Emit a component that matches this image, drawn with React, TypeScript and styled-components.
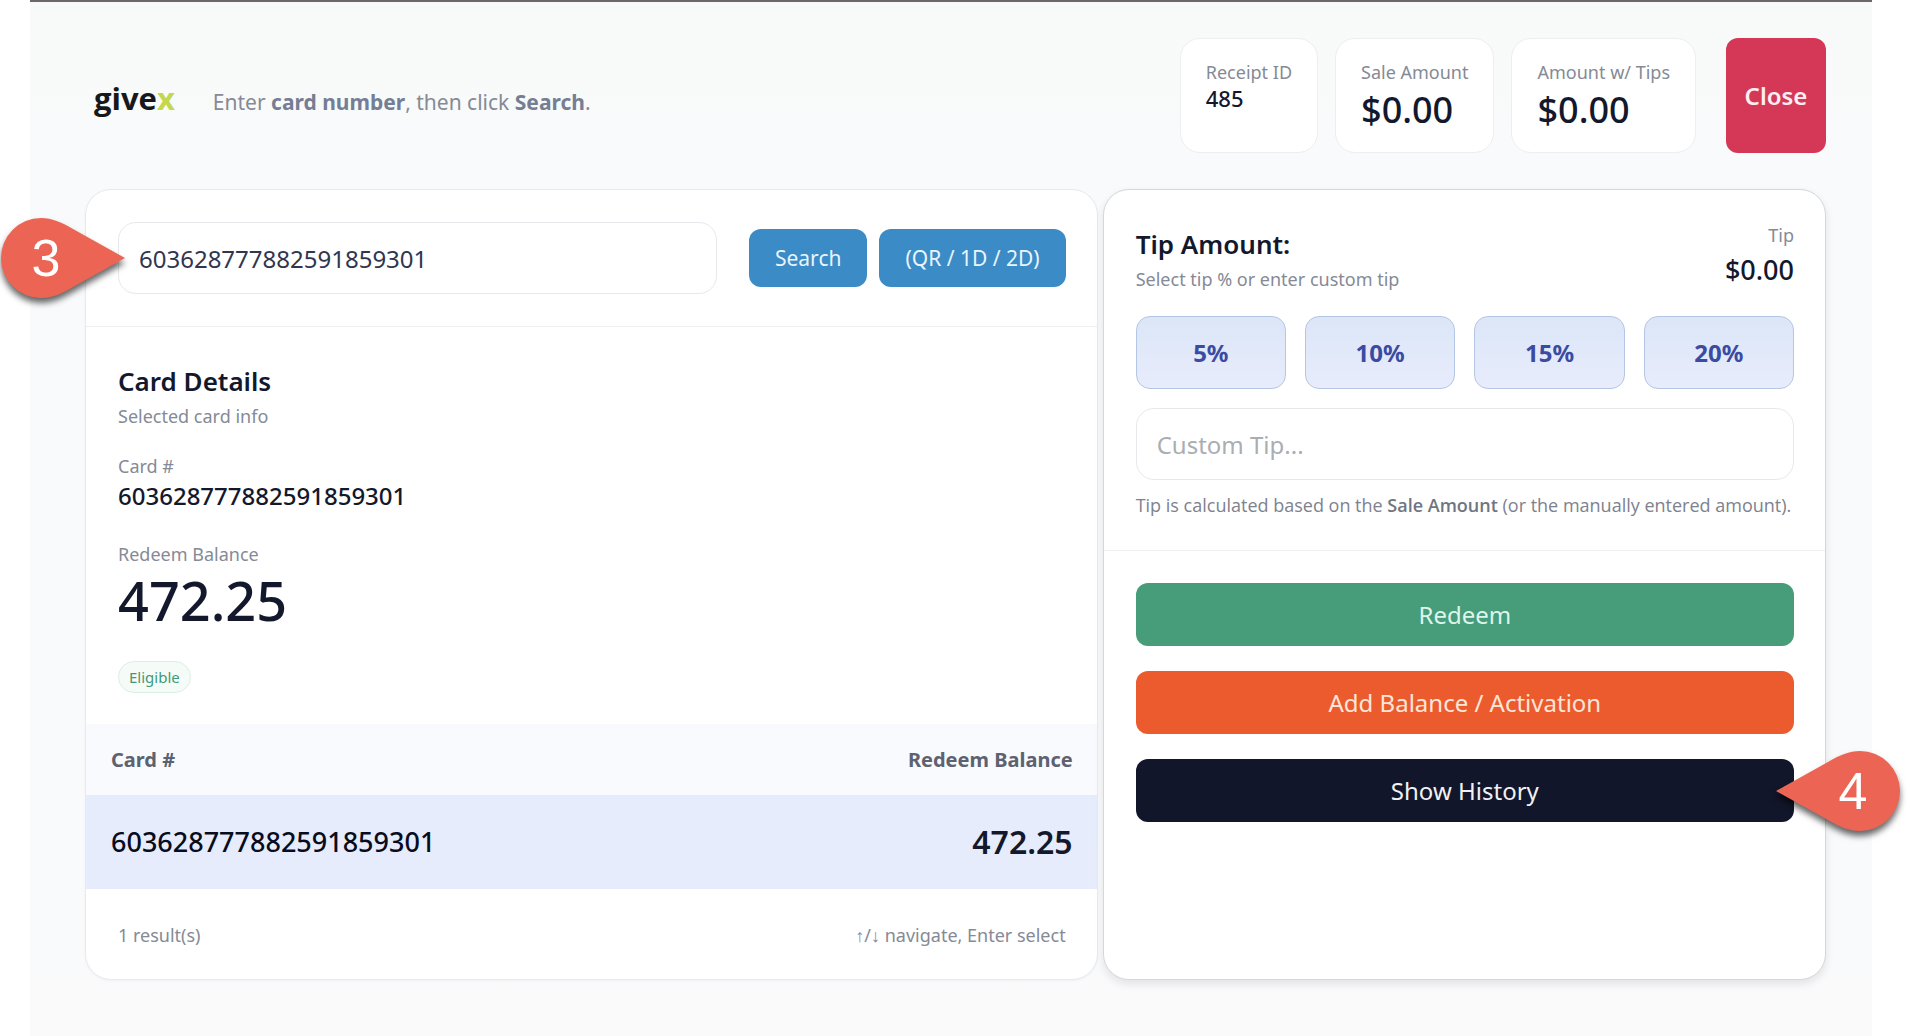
import React, { useState } from 'react';
import styled, { createGlobalStyle } from 'styled-components';

const ink = '#13182d';
const muted = '#858a96';
const line = '#eceef1';

const GlobalStyle = createGlobalStyle`
  *, *::before, *::after { box-sizing: border-box; }
  body {
    margin: 0;
    background: #ffffff;
    font-family: "Noto Sans", "Open Sans", sans-serif;
    font-size: 18px;
    line-height: 26px;
    color: ${ink};
  }
  button, input { font-family: inherit; }
  h1, h2, p, dl, dd { margin: 0; }
`;

const Screen = styled.main`
  display: flex;
  flex-direction: column;
  gap: 36px;
  min-height: 100vh;
  margin: 0 38px 0 30px;
  padding: 36px 46px 56px 55px;
  border-top: 2px solid #6e666b;
  background: linear-gradient(180deg, #f8faf9 0, #f9fafc 180px, #fafafb 100%);
`;

const Header = styled.header`
  display: flex;
  align-items: center;
  justify-content: space-between;
  gap: 30px;
`;

const Brand = styled.div`
  display: flex;
  align-items: baseline;
  gap: 38px;
  padding: 4px 0 0 9px;
`;

const Logo = styled.h1`
  font-family: "Open Sans", "Noto Sans", sans-serif;
  font-size: 31px;
  font-weight: 700;
  line-height: 44px;
  color: #17181a;

  span { color: #c3d84c; }
`;

const Hint = styled.p`
  font-size: 21px;
  line-height: 28px;
  color: ${muted};

  strong { font-weight: 700; color: #757e94; }
`;

const Summary = styled.div`
  display: flex;
  align-items: stretch;
  gap: 30px;
`;

const StatList = styled.dl`
  display: flex;
  gap: 17px;
`;

const Stat = styled.div`
  padding: 20px 25px 17px;
  border: 1px solid ${line};
  border-radius: 20px;
  background: #ffffff;
  white-space: nowrap;
`;

const StatLabel = styled.dt`
  color: ${muted};
`;

const StatValue = styled.dd<{ $large?: boolean }>`
  font-size: ${p => (p.$large ? 36 : 22)}px;
  line-height: ${p => (p.$large ? 50 : 26)}px;
  font-weight: 500;
`;

const CloseButton = styled.button`
  width: 100px;
  border: 0;
  border-radius: 12px;
  background: #d53857;
  color: #fdeef1;
  font-size: 24px;
  font-weight: 600;
`;

const Columns = styled.div`
  flex: 1;
  display: grid;
  grid-template-columns: 7fr 5fr;
  gap: 5px;
`;

const Card = styled.section<{ $raised?: boolean }>`
  display: flex;
  flex-direction: column;
  min-width: 0;
  border: 1px solid ${p => (p.$raised ? '#d5d7da' : '#e8eaed')};
  border-radius: 26px;
  background: #ffffff;
  box-shadow: ${p => (p.$raised ? '0 4px 8px rgba(20, 24, 40, 0.1)' : '0 1px 3px rgba(20, 24, 40, 0.04)')};
`;

const SearchBar = styled.form`
  display: flex;
  align-items: center;
  gap: 32px;
  padding: 32px 31px 32px 32px;
  border-bottom: 1px solid ${line};
`;

const SearchField = styled.div`
  position: relative;
  flex: 1;
`;

const TextInput = styled.input`
  display: block;
  width: 100%;
  height: 72px;
  padding: 0 20px;
  border: 1px solid #e6e8ec;
  border-radius: 18px;
  background: #ffffff;
  color: #30364f;
  font-size: 24px;
  outline: none;

  &::placeholder { color: #aaadb2; opacity: 1; }
`;

const SearchActions = styled.div`
  display: flex;
  gap: 12px;
`;

const BlueButton = styled.button`
  height: 58px;
  padding: 0 26px;
  border: 0;
  border-radius: 12px;
  background: #3b8bc6;
  color: #e8f5fd;
  font-size: 21px;
  white-space: nowrap;
`;

const Details = styled.div`
  padding: 32px 32px 31px;
`;

const Title = styled.h2`
  font-size: 26px;
  font-weight: 600;
  line-height: 44px;
`;

const Muted = styled.p`
  color: ${muted};
`;

const DetailList = styled.dl`
  display: grid;
  gap: 28px;
  margin: 24px 0 28px;
`;

const DetailValue = styled.dd<{ $large?: boolean }>`
  font-size: ${p => (p.$large ? 54 : 24)}px;
  line-height: ${p => (p.$large ? 66 : 34)}px;
  font-weight: 500;
`;

const Badge = styled.span`
  display: inline-block;
  padding: 0 10px;
  border: 1px solid #dcefe6;
  border-radius: 16px;
  background: #f5fcf8;
  color: #3f9a76;
  font-size: 15px;
  line-height: 30px;
  vertical-align: top;
`;

const Results = styled.table`
  width: 100%;
  border-collapse: collapse;
  text-align: left;

  th, td { padding: 0 24px 0 25px; }
  th:last-child, td:last-child { text-align: right; }
  th {
    height: 71px;
    background: #f9fafe;
    color: #5d6270;
    font-size: 20px;
    font-weight: 700;
  }
  td {
    height: 94px;
    background: #e6ecfb;
    color: #080c1c;
    font-size: 27px;
    font-weight: 500;
  }
  td:last-child { color: ${ink}; font-size: 32px; font-weight: 600; }
`;

const CardFooter = styled.footer`
  display: flex;
  justify-content: space-between;
  padding: 33px 31px 31px 32px;
  color: ${muted};
`;

const TipSection = styled.div`
  padding: 32px 31px 32px 32px;
  border-bottom: 1px solid ${line};
`;

const TipHeader = styled.div`
  display: flex;
  justify-content: space-between;
  margin-bottom: 24px;
`;

const TipTotal = styled.div`
  text-align: right;
`;

const TipValue = styled.p`
  font-size: 27px;
  font-weight: 500;
  line-height: 44px;
`;

const TipOptions = styled.div`
  display: grid;
  grid-template-columns: repeat(4, 1fr);
  gap: 19px;
  margin-bottom: 19px;
`;

const TipButton = styled.button`
  height: 73px;
  border: 1px solid #b5c5e4;
  border-radius: 14px;
  background: linear-gradient(180deg, #dbe6f7, #e8ecfc);
  color: #3a4ba1;
  font-size: 24px;
  font-weight: 700;
`;

const TipNote = styled.p`
  margin-top: 12px;
  color: #7d828e;
  font-family: "Open Sans", "Noto Sans", sans-serif;
  white-space: nowrap;

  strong { font-weight: 600; color: #6f7582; }
`;

const Actions = styled.div`
  display: grid;
  gap: 25px;
  padding: 32px 31px 32px 32px;
`;

const ActionSlot = styled.div`
  position: relative;
`;

const ActionButton = styled.button<{ $color: string; $text: string }>`
  display: block;
  width: 100%;
  height: 63px;
  border: 0;
  border-radius: 12px;
  background: ${p => p.$color};
  color: ${p => p.$text};
  font-size: 24px;
`;

const PinBox = styled.div<{ $side: 'left' | 'right' }>`
  position: absolute;
  top: 50%;
  ${p => (p.$side === 'left' ? 'right: calc(100% - 7px);' : 'left: calc(100% - 18px);')}
  display: grid;
  width: 124px;
  height: 80px;
  transform: translateY(-50%);
  pointer-events: none;

  svg, span { grid-area: 1 / 1; }
  svg {
    overflow: visible;
    transform: ${p => (p.$side === 'left' ? 'none' : 'scaleX(-1)')};
    filter: drop-shadow(0 5px 3px rgba(0, 0, 0, 0.6));
  }
  span {
    position: relative;
    padding: ${p => (p.$side === 'left' ? '0 34px 0 0' : '0 0 0 30px')};
    color: #ffffff;
    font-family: "Liberation Sans", sans-serif;
    font-size: 52px;
    line-height: 80px;
    text-align: center;
  }
`;

function Pin({ side, label }: { side: 'left' | 'right'; label: string }) {
  return (
    <PinBox $side={side}>
      <svg width="124" height="80" viewBox="0 0 124 80" aria-hidden="true">
        <path d="M124 40L72 11C60 4 51 0 40 0A40 40 0 0 0 40 80C51 80 60 76 72 69Z" fill="#ec6554" />
      </svg>
      <span>{label}</span>
    </PinBox>
  );
}

const CARD = '603628777882591859301';

export default function App() {
  const [card, setCard] = useState(CARD);
  const [tip, setTip] = useState('');

  return (
    <>
      <GlobalStyle />
      <Screen>
        <Header>
          <Brand>
            <Logo>give<span>x</span></Logo>
            <Hint>Enter <strong>card number</strong>, then click <strong>Search</strong>.</Hint>
          </Brand>
          <Summary>
            <StatList>
              <Stat>
                <StatLabel>Receipt ID</StatLabel>
                <StatValue>485</StatValue>
              </Stat>
              <Stat>
                <StatLabel>Sale Amount</StatLabel>
                <StatValue $large>$0.00</StatValue>
              </Stat>
              <Stat>
                <StatLabel>Amount w/ Tips</StatLabel>
                <StatValue $large>$0.00</StatValue>
              </Stat>
            </StatList>
            <CloseButton type="button">Close</CloseButton>
          </Summary>
        </Header>

        <Columns>
          <Card>
            <SearchBar onSubmit={e => e.preventDefault()}>
              <SearchField>
                <TextInput aria-label="Card number" value={card} onChange={e => setCard(e.target.value)} />
                <Pin side="left" label="3" />
              </SearchField>
              <SearchActions>
                <BlueButton type="submit">Search</BlueButton>
                <BlueButton type="button">(QR / 1D / 2D)</BlueButton>
              </SearchActions>
            </SearchBar>

            <Details>
              <Title>Card Details</Title>
              <Muted>Selected card info</Muted>
              <DetailList>
                <div>
                  <StatLabel>Card #</StatLabel>
                  <DetailValue>{CARD}</DetailValue>
                </div>
                <div>
                  <StatLabel>Redeem Balance</StatLabel>
                  <DetailValue $large>472.25</DetailValue>
                </div>
              </DetailList>
              <Badge>Eligible</Badge>
            </Details>

            <Results>
              <thead>
                <tr>
                  <th scope="col">Card #</th>
                  <th scope="col">Redeem Balance</th>
                </tr>
              </thead>
              <tbody>
                <tr>
                  <td>{CARD}</td>
                  <td>472.25</td>
                </tr>
              </tbody>
            </Results>

            <CardFooter>
              <span>1 result(s)</span>
              <span>↑/↓ navigate, Enter select</span>
            </CardFooter>
          </Card>

          <Card $raised>
            <TipSection>
              <TipHeader>
                <div>
                  <Title>Tip Amount:</Title>
                  <Muted>Select tip % or enter custom tip</Muted>
                </div>
                <TipTotal>
                  <Muted>Tip</Muted>
                  <TipValue>$0.00</TipValue>
                </TipTotal>
              </TipHeader>
              <TipOptions>
                {[5, 10, 15, 20].map(n => (
                  <TipButton key={n} type="button">{n}%</TipButton>
                ))}
              </TipOptions>
              <TextInput
                aria-label="Custom tip"
                placeholder="Custom Tip..."
                value={tip}
                onChange={e => setTip(e.target.value)}
              />
              <TipNote>
                Tip is calculated based on the <strong>Sale Amount</strong> (or the manually entered amount).
              </TipNote>
            </TipSection>
            <Actions>
              <ActionButton type="button" $color="#479c79" $text="#dcf6ec">Redeem</ActionButton>
              <ActionButton type="button" $color="#ec5b2d" $text="#fde6d8">Add Balance / Activation</ActionButton>
              <ActionSlot>
                <ActionButton type="button" $color="#11162a" $text="#f1f1f1">Show History</ActionButton>
                <Pin side="right" label="4" />
              </ActionSlot>
            </Actions>
          </Card>
        </Columns>
      </Screen>
    </>
  );
}
